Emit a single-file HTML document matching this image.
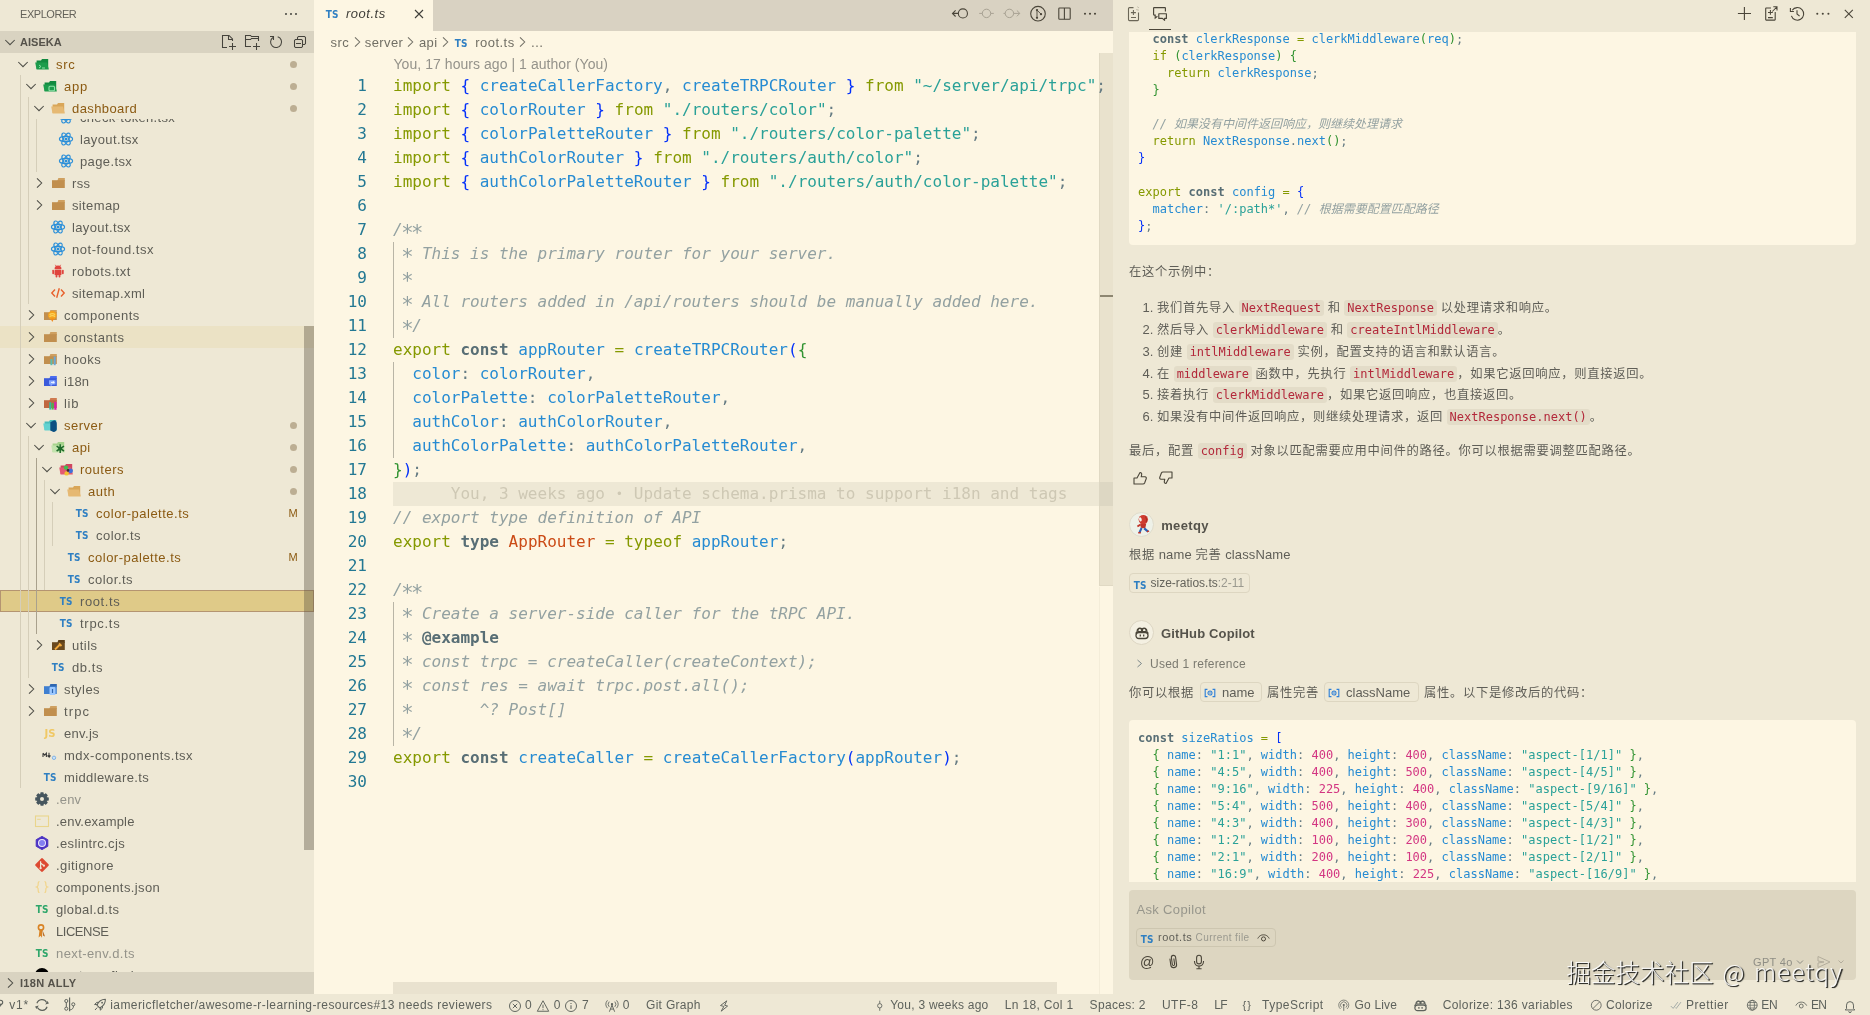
<!DOCTYPE html>
<html lang="en"><head><meta charset="utf-8"><title>root.ts — aiseka</title>
<style>
*{box-sizing:border-box;margin:0;padding:0}
html,body{width:1870px;height:1015px;overflow:hidden;background:#eee8d5}
body{font-family:"Liberation Sans","Noto Sans CJK SC",sans-serif;font-size:13px;color:#5f5e57;position:relative}
#root{position:absolute;left:0;top:0;width:1870px;height:1015px;will-change:transform}
.abs{position:absolute}
svg{display:block;overflow:visible}
.mono{font-family:"DejaVu Sans Mono","Liberation Mono","Noto Sans CJK SC",monospace}
/* sidebar */
#sb{position:absolute;left:0;top:0;width:314px;height:994px;background:#eee8d5;overflow:hidden}
#sb .title{position:absolute;left:20px;top:0;height:31px;line-height:29px;font-size:11px;color:#64625a;letter-spacing:-.45px}
.sech{position:absolute;left:0;width:314px;height:22px;background:#d9d3c1;font-size:11px;font-weight:bold;color:#55524a;line-height:22px}
.sech span{position:absolute;left:20px;top:0}
.row{position:absolute;left:0;width:314px;height:22px;line-height:22px;font-size:13px;color:#5f5e56;white-space:nowrap}
.row .tw{position:absolute;top:3px;width:16px;height:16px}
.row .ic{position:absolute;top:3px;width:16px;height:16px}
.row .nm{position:absolute;top:1px}
.row .dec{position:absolute;left:287px;top:0;width:12px;text-align:center;font-size:11px}
.row .dot{position:absolute;left:289.6px;top:7.6px;width:7px;height:7px;border-radius:4px;background:#bcae93}
.mod .nm,.mod .dec{color:#8b5a12}
.ign .nm{color:#94938a}
.guide{position:absolute;width:1px;background:#d5ceb9}
.guide.act{background:#a9a18d}
/* editor */
#ed{position:absolute;left:314px;top:0;width:799px;height:994px;background:#fdf6e3;overflow:hidden}
#tabs{position:absolute;left:0;top:0;width:799px;height:31px;background:#d9d2c2}
#tab{position:absolute;left:0;top:0;width:119px;height:31px;background:#fdf6e3}
.ln{position:absolute;left:0;width:53px;text-align:right;font-size:16px;height:24px;line-height:24px;color:#237893}
.cl{position:absolute;left:79px;font-size:16px;height:24px;line-height:24px;white-space:pre;color:#657b83}
.k{color:#859900}.s{color:#586e75;font-weight:bold}.v{color:#268bd2}.st{color:#2aa198}.c{color:#93a1a1;font-style:italic}
.t{color:#cb4b16}.n{color:#d33682}.b1{color:#0431fa}.b2{color:#319331}.b3{color:#7b3814}.p{color:#657b83}
.as{font-size:20.5px;margin:0 -1.36px;position:relative;top:4.6px;font-style:normal;line-height:0}
.cb{color:#586e75;font-weight:bold;font-style:normal}
/* panel */
#pn{position:absolute;left:1113px;top:0;width:757px;height:994px;background:#eee8d5;overflow:hidden}
.code{position:absolute;left:16px;width:727px;background:#fdf6e3;border-radius:4px;overflow:hidden}
.code .l{position:absolute;left:9px;font-size:12px;line-height:17px;height:17px;white-space:pre;color:#657b83}
.tx{position:absolute;white-space:nowrap;font-size:13px;color:#5f5e57;line-height:20px;height:20px}
.ico{font-family:"DejaVu Sans Mono","Liberation Mono","Noto Sans CJK SC",monospace;font-size:12px;color:#b3283a;background:#e3dcc8;border-radius:3px;padding:1px 3px;margin:0}
.zh{font-size:12.3px;letter-spacing:.7px}
.chip{position:absolute;border:1px solid #ddd6c1;border-radius:4px;height:20px;font-size:11px;line-height:18px;color:#64635b;white-space:nowrap}
/* status */
#st{position:absolute;left:0;top:994px;width:1870px;height:21px;background:#eee8d5;font-size:12px;color:#5e625c;line-height:21px;white-space:nowrap}
#st .i{position:absolute;top:1px}
</style></head>
<body>
<div id="root">
<div id="sb">
<div class="title">EXPLORER</div>
<div class="abs" style="left:283px;top:6px"><svg width="16" height="16" viewBox="0 0 16 16" style=""><circle cx="3" cy="8" r="1.05" fill="#4d4d46"/><circle cx="8" cy="8" r="1.05" fill="#4d4d46"/><circle cx="13" cy="8" r="1.05" fill="#4d4d46"/></svg></div>
<div class="abs" style="left:0;top:0;width:314px;height:972px;overflow:hidden">
<div class="row " style="top:106px;"><div class="ic" style="left:58px"><svg width="16" height="16" viewBox="0 0 16 16" style=""><ellipse cx="8" cy="8" rx="6.6" ry="2.6" fill="none" stroke="#2b8fd9" stroke-width="1.15"/><ellipse cx="8" cy="8" rx="6.6" ry="2.6" fill="none" stroke="#2b8fd9" stroke-width="1.15" transform="rotate(60 8 8)"/><ellipse cx="8" cy="8" rx="6.6" ry="2.6" fill="none" stroke="#2b8fd9" stroke-width="1.15" transform="rotate(120 8 8)"/><circle cx="8" cy="8" r="1.5" fill="#2b8fd9"/></svg></div><div class="nm" style="left:80px;letter-spacing:0.321px;">check-token.tsx</div></div>
<div class="row " style="top:128px;"><div class="ic" style="left:58px"><svg width="16" height="16" viewBox="0 0 16 16" style=""><ellipse cx="8" cy="8" rx="6.6" ry="2.6" fill="none" stroke="#2b8fd9" stroke-width="1.15"/><ellipse cx="8" cy="8" rx="6.6" ry="2.6" fill="none" stroke="#2b8fd9" stroke-width="1.15" transform="rotate(60 8 8)"/><ellipse cx="8" cy="8" rx="6.6" ry="2.6" fill="none" stroke="#2b8fd9" stroke-width="1.15" transform="rotate(120 8 8)"/><circle cx="8" cy="8" r="1.5" fill="#2b8fd9"/></svg></div><div class="nm" style="left:80px;letter-spacing:0.377px;">layout.tsx</div></div>
<div class="row " style="top:150px;"><div class="ic" style="left:58px"><svg width="16" height="16" viewBox="0 0 16 16" style=""><ellipse cx="8" cy="8" rx="6.6" ry="2.6" fill="none" stroke="#2b8fd9" stroke-width="1.15"/><ellipse cx="8" cy="8" rx="6.6" ry="2.6" fill="none" stroke="#2b8fd9" stroke-width="1.15" transform="rotate(60 8 8)"/><ellipse cx="8" cy="8" rx="6.6" ry="2.6" fill="none" stroke="#2b8fd9" stroke-width="1.15" transform="rotate(120 8 8)"/><circle cx="8" cy="8" r="1.5" fill="#2b8fd9"/></svg></div><div class="nm" style="left:80px;letter-spacing:0.38px;">page.tsx</div></div>
<div class="row " style="top:172px;"><div class="tw" style="left:31px"><svg width="16" height="16" viewBox="0 0 16 16" style=""><path d="M6 3.3 L10.7 8 L6 12.7" fill="none" stroke="#4d4d46" stroke-width="1.05"/></svg></div><div class="ic" style="left:50px"><svg width="16" height="16" viewBox="0 0 16 16" style=""><path d="M8.4 3 L14.8 3 L14.8 6 L7.2 6 Z" fill="#cfa060"/><path d="M2 5.2 L14.8 5.2 L14.8 13 L2 13 Z" fill="#c18f4e"/></svg></div><div class="nm" style="left:72px;letter-spacing:0.336px;">rss</div></div>
<div class="row " style="top:194px;"><div class="tw" style="left:31px"><svg width="16" height="16" viewBox="0 0 16 16" style=""><path d="M6 3.3 L10.7 8 L6 12.7" fill="none" stroke="#4d4d46" stroke-width="1.05"/></svg></div><div class="ic" style="left:50px"><svg width="16" height="16" viewBox="0 0 16 16" style=""><path d="M8.4 3 L14.8 3 L14.8 6 L7.2 6 Z" fill="#cfa060"/><path d="M2 5.2 L14.8 5.2 L14.8 13 L2 13 Z" fill="#c18f4e"/></svg></div><div class="nm" style="left:72px;letter-spacing:0.364px;">sitemap</div></div>
<div class="row " style="top:216px;"><div class="ic" style="left:50px"><svg width="16" height="16" viewBox="0 0 16 16" style=""><ellipse cx="8" cy="8" rx="6.6" ry="2.6" fill="none" stroke="#2b8fd9" stroke-width="1.15"/><ellipse cx="8" cy="8" rx="6.6" ry="2.6" fill="none" stroke="#2b8fd9" stroke-width="1.15" transform="rotate(60 8 8)"/><ellipse cx="8" cy="8" rx="6.6" ry="2.6" fill="none" stroke="#2b8fd9" stroke-width="1.15" transform="rotate(120 8 8)"/><circle cx="8" cy="8" r="1.5" fill="#2b8fd9"/></svg></div><div class="nm" style="left:72px;letter-spacing:0.377px;">layout.tsx</div></div>
<div class="row " style="top:238px;"><div class="ic" style="left:50px"><svg width="16" height="16" viewBox="0 0 16 16" style=""><ellipse cx="8" cy="8" rx="6.6" ry="2.6" fill="none" stroke="#2b8fd9" stroke-width="1.15"/><ellipse cx="8" cy="8" rx="6.6" ry="2.6" fill="none" stroke="#2b8fd9" stroke-width="1.15" transform="rotate(60 8 8)"/><ellipse cx="8" cy="8" rx="6.6" ry="2.6" fill="none" stroke="#2b8fd9" stroke-width="1.15" transform="rotate(120 8 8)"/><circle cx="8" cy="8" r="1.5" fill="#2b8fd9"/></svg></div><div class="nm" style="left:72px;letter-spacing:0.529px;">not-found.tsx</div></div>
<div class="row " style="top:260px;"><div class="ic" style="left:50px"><svg width="16" height="16" viewBox="0 0 16 16" style=""><path d="M4.5 6.2 a3.5 3.6 0 0 1 7 0 Z" fill="#e0443e"/><rect x="4.5" y="6.8" width="7" height="5.4" rx="1" fill="#e0443e"/><rect x="2.3" y="6.8" width="1.7" height="4.4" rx=".8" fill="#e0443e"/><rect x="12" y="6.8" width="1.7" height="4.4" rx=".8" fill="#e0443e"/><rect x="5.6" y="12" width="1.8" height="2.6" rx=".8" fill="#e0443e"/><rect x="8.6" y="12" width="1.8" height="2.6" rx=".8" fill="#e0443e"/><path d="M5.3 1.8 L6.3 3.4 M10.7 1.8 L9.7 3.4" stroke="#e0443e" stroke-width=".8"/></svg></div><div class="nm" style="left:72px;letter-spacing:0.549px;">robots.txt</div></div>
<div class="row " style="top:282px;"><div class="ic" style="left:50px"><svg width="16" height="16" viewBox="0 0 16 16" style=""><path d="M5 4.5 L1.8 8 L5 11.5 M11 4.5 L14.2 8 L11 11.5 M9.3 3.2 L6.7 12.8" fill="none" stroke="#e8602c" stroke-width="1.4"/></svg></div><div class="nm" style="left:72px;letter-spacing:0.366px;">sitemap.xml</div></div>
<div class="row " style="top:304px;"><div class="tw" style="left:23px"><svg width="16" height="16" viewBox="0 0 16 16" style=""><path d="M6 3.3 L10.7 8 L6 12.7" fill="none" stroke="#4d4d46" stroke-width="1.05"/></svg></div><div class="ic" style="left:42px"><svg width="16" height="16" viewBox="0 0 16 16" style=""><path d="M8.4 3 L14.8 3 L14.8 6 L7.2 6 Z" fill="#cfa060"/><path d="M2 5.2 L14.8 5.2 L14.8 13 L2 13 Z" fill="#c18f4e"/><circle cx="10.3" cy="8.2" r="4.3" fill="#f5a21d"/><path d="M8.5 11.5 L10.3 15 L12.1 11.5 Z" fill="#f08a1c"/><path d="M7.5 7.6 q2.8 -2 5.6 0 M7.5 9.6 q2.8 -2 5.6 0" stroke="#fbd35a" stroke-width="1.3" fill="none"/></svg></div><div class="nm" style="left:64px;letter-spacing:0.498px;">components</div></div>
<div class="row " style="top:326px;background:#ebe2c5;"><div class="tw" style="left:23px"><svg width="16" height="16" viewBox="0 0 16 16" style=""><path d="M6 3.3 L10.7 8 L6 12.7" fill="none" stroke="#4d4d46" stroke-width="1.05"/></svg></div><div class="ic" style="left:42px"><svg width="16" height="16" viewBox="0 0 16 16" style=""><path d="M8.4 3 L14.8 3 L14.8 6 L7.2 6 Z" fill="#cfa060"/><path d="M2 5.2 L14.8 5.2 L14.8 13 L2 13 Z" fill="#c18f4e"/></svg></div><div class="nm" style="left:64px;letter-spacing:0.545px;">constants</div></div>
<div class="row " style="top:348px;"><div class="tw" style="left:23px"><svg width="16" height="16" viewBox="0 0 16 16" style=""><path d="M6 3.3 L10.7 8 L6 12.7" fill="none" stroke="#4d4d46" stroke-width="1.05"/></svg></div><div class="ic" style="left:42px"><svg width="16" height="16" viewBox="0 0 16 16" style=""><path d="M8.4 3 L14.8 3 L14.8 6 L7.2 6 Z" fill="#cfa060"/><path d="M2 5.2 L14.8 5.2 L14.8 13 L2 13 Z" fill="#c18f4e"/><path d="M9.4 14.2 V8 " stroke="#5bbcb0" stroke-width="2"/><path d="M12.7 14.2 V5.5" stroke="#6aa8d8" stroke-width="2"/></svg></div><div class="nm" style="left:64px;letter-spacing:0.503px;">hooks</div></div>
<div class="row " style="top:370px;"><div class="tw" style="left:23px"><svg width="16" height="16" viewBox="0 0 16 16" style=""><path d="M6 3.3 L10.7 8 L6 12.7" fill="none" stroke="#4d4d46" stroke-width="1.05"/></svg></div><div class="ic" style="left:42px"><svg width="16" height="16" viewBox="0 0 16 16" style=""><path d="M8.4 3 L14.8 3 L14.8 6 L7.2 6 Z" fill="#4a6cf0"/><path d="M2 5.2 L14.8 5.2 L14.8 13 L2 13 Z" fill="#3b5bdb"/><path d="M7 7.2 h6.5 v4.3 h-3 l-2 2.2 v-2.2 h-1.5 z" fill="#86a8ff"/><path d="M9 9.4 h3 M11 8.2 l1.2 1.2 l-1.2 1.2" stroke="#fff" stroke-width=".9" fill="none"/></svg></div><div class="nm" style="left:64px;letter-spacing:0.175px;">i18n</div></div>
<div class="row " style="top:392px;"><div class="tw" style="left:23px"><svg width="16" height="16" viewBox="0 0 16 16" style=""><path d="M6 3.3 L10.7 8 L6 12.7" fill="none" stroke="#4d4d46" stroke-width="1.05"/></svg></div><div class="ic" style="left:42px"><svg width="16" height="16" viewBox="0 0 16 16" style=""><path d="M8.4 3 L14.8 3 L14.8 6 L7.2 6 Z" fill="#cf7a4f"/><path d="M2 5.2 L14.8 5.2 L14.8 13 L2 13 Z" fill="#c0673f"/><path d="M8.3 14.6 V7.2" stroke="#35b5a0" stroke-width="2.1"/><path d="M10.7 14.6 V8" stroke="#4caf50" stroke-width="2.1"/><path d="M13.4 14.8 V6.8" stroke="#d61fae" stroke-width="2.3"/></svg></div><div class="nm" style="left:64px;letter-spacing:0.697px;">lib</div></div>
<div class="row mod" style="top:414px;"><div class="tw" style="left:23px"><svg width="16" height="16" viewBox="0 0 16 16" style=""><path d="M3.3 6 L8 10.7 L12.7 6" fill="none" stroke="#4d4d46" stroke-width="1.05"/></svg></div><div class="ic" style="left:42px"><svg width="16" height="16" viewBox="0 0 16 16" style=""><path d="M2.6 4.6 L7 4.6 L8 3 L14.2 3 L14.2 13 L2.6 13 Z" fill="#48bdbb"/><path d="M1.2 6.4 L13 6.4 L14.8 13.4 L2.6 13.4 Z" fill="#62d2d0"/><path d="M8.3 5.2 L12.2 3.2 Q14.8 3.6 14.8 7 V12 Q14.6 14.6 11.5 15 L8.3 13.6 Z" fill="#0b4f82"/></svg></div><div class="nm" style="left:64px;letter-spacing:0.477px;">server</div><div class="dot"></div></div>
<div class="row mod" style="top:436px;"><div class="tw" style="left:31px"><svg width="16" height="16" viewBox="0 0 16 16" style=""><path d="M3.3 6 L8 10.7 L12.7 6" fill="none" stroke="#4d4d46" stroke-width="1.05"/></svg></div><div class="ic" style="left:50px"><svg width="16" height="16" viewBox="0 0 16 16" style=""><path d="M2.6 4.6 L7 4.6 L8 3 L14.2 3 L14.2 13 L2.6 13 Z" fill="#a6d38c"/><path d="M1.2 6.4 L13 6.4 L14.8 13.4 L2.6 13.4 Z" fill="#c3e3ad"/><path d="M10.2 5.2 V14 M6.6 7.2 L14 12 M14 7.2 L6.6 12" stroke="#1f6b2a" stroke-width="1.5"/><circle cx="10.2" cy="9.6" r="2" fill="#1f6b2a"/></svg></div><div class="nm" style="left:72px;letter-spacing:0.427px;">api</div><div class="dot"></div></div>
<div class="row mod" style="top:458px;"><div class="tw" style="left:39px"><svg width="16" height="16" viewBox="0 0 16 16" style=""><path d="M3.3 6 L8 10.7 L12.7 6" fill="none" stroke="#4d4d46" stroke-width="1.05"/></svg></div><div class="ic" style="left:58px"><svg width="16" height="16" viewBox="0 0 16 16" style=""><path d="M2.6 4.6 L7 4.6 L8 3 L14.2 3 L14.2 13 L2.6 13 Z" fill="#d0465f"/><path d="M1.2 6.4 L13 6.4 L14.8 13.4 L2.6 13.4 Z" fill="#e25a72"/><circle cx="8" cy="6.6" r="2.2" fill="#3fbf4f"/><circle cx="12.6" cy="9.8" r="2.4" fill="#3f6fd8"/><circle cx="8.6" cy="12.4" r="2.2" fill="#f2c230"/><circle cx="10" cy="9.4" r="1.3" fill="#3a2a2a"/></svg></div><div class="nm" style="left:80px;letter-spacing:0.524px;">routers</div><div class="dot"></div></div>
<div class="row mod" style="top:480px;"><div class="tw" style="left:47px"><svg width="16" height="16" viewBox="0 0 16 16" style=""><path d="M3.3 6 L8 10.7 L12.7 6" fill="none" stroke="#4d4d46" stroke-width="1.05"/></svg></div><div class="ic" style="left:66px"><svg width="16" height="16" viewBox="0 0 16 16" style=""><path d="M2.6 4.6 L7 4.6 L8 3 L14.2 3 L14.2 13 L2.6 13 Z" fill="#d9a658"/><path d="M1.2 6.4 L13 6.4 L14.8 13.4 L2.6 13.4 Z" fill="#e6b973"/></svg></div><div class="nm" style="left:88px;letter-spacing:0.467px;">auth</div><div class="dot"></div></div>
<div class="row mod" style="top:502px;"><div class="ic" style="left:74px"><svg width="16" height="16" viewBox="0 0 16 16" style=""><text x="1.8" y="12.1" font-family="DejaVu Sans, Liberation Sans, sans-serif" font-weight="bold" font-size="11" fill="#2f7fc2" textLength="12.6" lengthAdjust="spacingAndGlyphs">TS</text></svg></div><div class="nm" style="left:96px;letter-spacing:0.503px;">color-palette.ts</div><div class="dec">M</div></div>
<div class="row " style="top:524px;"><div class="ic" style="left:74px"><svg width="16" height="16" viewBox="0 0 16 16" style=""><text x="1.8" y="12.1" font-family="DejaVu Sans, Liberation Sans, sans-serif" font-weight="bold" font-size="11" fill="#2f7fc2" textLength="12.6" lengthAdjust="spacingAndGlyphs">TS</text></svg></div><div class="nm" style="left:96px;letter-spacing:0.488px;">color.ts</div></div>
<div class="row mod" style="top:546px;"><div class="ic" style="left:66px"><svg width="16" height="16" viewBox="0 0 16 16" style=""><text x="1.8" y="12.1" font-family="DejaVu Sans, Liberation Sans, sans-serif" font-weight="bold" font-size="11" fill="#2f7fc2" textLength="12.6" lengthAdjust="spacingAndGlyphs">TS</text></svg></div><div class="nm" style="left:88px;letter-spacing:0.503px;">color-palette.ts</div><div class="dec">M</div></div>
<div class="row " style="top:568px;"><div class="ic" style="left:66px"><svg width="16" height="16" viewBox="0 0 16 16" style=""><text x="1.8" y="12.1" font-family="DejaVu Sans, Liberation Sans, sans-serif" font-weight="bold" font-size="11" fill="#2f7fc2" textLength="12.6" lengthAdjust="spacingAndGlyphs">TS</text></svg></div><div class="nm" style="left:88px;letter-spacing:0.488px;">color.ts</div></div>
<div class="row " style="top:590px;background:#dfca88;outline:1px solid #b49471;outline-offset:-1px;"><div class="ic" style="left:58px"><svg width="16" height="16" viewBox="0 0 16 16" style=""><text x="1.8" y="12.1" font-family="DejaVu Sans, Liberation Sans, sans-serif" font-weight="bold" font-size="11" fill="#2f7fc2" textLength="12.6" lengthAdjust="spacingAndGlyphs">TS</text></svg></div><div class="nm" style="left:80px;letter-spacing:0.596px;">root.ts</div></div>
<div class="row " style="top:612px;"><div class="ic" style="left:58px"><svg width="16" height="16" viewBox="0 0 16 16" style=""><text x="1.8" y="12.1" font-family="DejaVu Sans, Liberation Sans, sans-serif" font-weight="bold" font-size="11" fill="#2f7fc2" textLength="12.6" lengthAdjust="spacingAndGlyphs">TS</text></svg></div><div class="nm" style="left:80px;letter-spacing:0.718px;">trpc.ts</div></div>
<div class="row " style="top:634px;"><div class="tw" style="left:31px"><svg width="16" height="16" viewBox="0 0 16 16" style=""><path d="M6 3.3 L10.7 8 L6 12.7" fill="none" stroke="#4d4d46" stroke-width="1.05"/></svg></div><div class="ic" style="left:50px"><svg width="16" height="16" viewBox="0 0 16 16" style=""><path d="M8.4 3 L14.8 3 L14.8 6 L7.2 6 Z" fill="#5a3d17"/><path d="M2 5.2 L14.8 5.2 L14.8 13 L2 13 Z" fill="#6b4a1e"/><path d="M5 12.5 l5 -5 M9 6.5 l2.5 2.5" stroke="#f2a93b" stroke-width="1.8"/></svg></div><div class="nm" style="left:72px;letter-spacing:0.496px;">utils</div></div>
<div class="row " style="top:656px;"><div class="ic" style="left:50px"><svg width="16" height="16" viewBox="0 0 16 16" style=""><text x="1.8" y="12.1" font-family="DejaVu Sans, Liberation Sans, sans-serif" font-weight="bold" font-size="11" fill="#2f7fc2" textLength="12.6" lengthAdjust="spacingAndGlyphs">TS</text></svg></div><div class="nm" style="left:72px;letter-spacing:0.58px;">db.ts</div></div>
<div class="row " style="top:678px;"><div class="tw" style="left:23px"><svg width="16" height="16" viewBox="0 0 16 16" style=""><path d="M6 3.3 L10.7 8 L6 12.7" fill="none" stroke="#4d4d46" stroke-width="1.05"/></svg></div><div class="ic" style="left:42px"><svg width="16" height="16" viewBox="0 0 16 16" style=""><path d="M8.4 3 L14.8 3 L14.8 6 L7.2 6 Z" fill="#2f66b0"/><path d="M2 5.2 L14.8 5.2 L14.8 13 L2 13 Z" fill="#3f7fd0"/><rect x="7.5" y="6" width="6" height="8" rx="1" fill="#9cc8ff"/><path d="M10.5 8 v4" stroke="#2f66b0" stroke-width="1.2"/></svg></div><div class="nm" style="left:64px;letter-spacing:0.474px;">styles</div></div>
<div class="row " style="top:700px;"><div class="tw" style="left:23px"><svg width="16" height="16" viewBox="0 0 16 16" style=""><path d="M6 3.3 L10.7 8 L6 12.7" fill="none" stroke="#4d4d46" stroke-width="1.05"/></svg></div><div class="ic" style="left:42px"><svg width="16" height="16" viewBox="0 0 16 16" style=""><path d="M8.4 3 L14.8 3 L14.8 6 L7.2 6 Z" fill="#cfa060"/><path d="M2 5.2 L14.8 5.2 L14.8 13 L2 13 Z" fill="#c18f4e"/></svg></div><div class="nm" style="left:64px;letter-spacing:1.144px;">trpc</div></div>
<div class="row " style="top:722px;"><div class="ic" style="left:42px"><svg width="16" height="16" viewBox="0 0 16 16" style=""><text x="2.6" y="12.2" font-family="DejaVu Sans, Liberation Sans, sans-serif" font-weight="bold" font-size="9.6" fill="#f0c864" textLength="11" lengthAdjust="spacingAndGlyphs">JS</text></svg></div><div class="nm" style="left:64px;letter-spacing:0.321px;">env.js</div></div>
<div class="row " style="top:744px;"><div class="ic" style="left:42px"><svg width="16" height="16" viewBox="0 0 16 16" style=""><path d="M1 6.2 v3.8 M1 6.2 l1.7 1.9 l1.7 -1.9 v3.8 M7 5.8 v4.2 l-1.5 -1.5 M7 10 l1.5 -1.5" fill="none" stroke="#3a3a3a" stroke-width="1.1"/><circle cx="12" cy="10.8" r="1.7" fill="#cfe3f7" stroke="#7fb3e6" stroke-width="1"/></svg></div><div class="nm" style="left:64px;letter-spacing:0.51px;">mdx-components.tsx</div></div>
<div class="row " style="top:766px;"><div class="ic" style="left:42px"><svg width="16" height="16" viewBox="0 0 16 16" style=""><text x="1.8" y="12.1" font-family="DejaVu Sans, Liberation Sans, sans-serif" font-weight="bold" font-size="11" fill="#2f7fc2" textLength="12.6" lengthAdjust="spacingAndGlyphs">TS</text></svg></div><div class="nm" style="left:64px;letter-spacing:0.384px;">middleware.ts</div></div>
<div class="row ign" style="top:788px;"><div class="ic" style="left:34px"><svg width="16" height="16" viewBox="0 0 16 16" style=""><rect x="6.3" y="1.2" width="3.4" height="13.6" rx=".7" fill="#46565e" transform="rotate(0 8 8)"/><rect x="6.3" y="1.2" width="3.4" height="13.6" rx=".7" fill="#46565e" transform="rotate(45 8 8)"/><rect x="6.3" y="1.2" width="3.4" height="13.6" rx=".7" fill="#46565e" transform="rotate(90 8 8)"/><rect x="6.3" y="1.2" width="3.4" height="13.6" rx=".7" fill="#46565e" transform="rotate(135 8 8)"/><circle cx="8" cy="8" r="5.2" fill="#46565e"/><circle cx="8" cy="8" r="2" fill="#eee8d5"/></svg></div><div class="nm" style="left:56px;letter-spacing:0.177px;">.env</div></div>
<div class="row " style="top:810px;"><div class="ic" style="left:34px"><svg width="16" height="16" viewBox="0 0 16 16" style=""><rect x="1.5" y="3" width="13" height="10.5" fill="none" stroke="#ead58c" stroke-width="1.1"/><path d="M3.2 6.3 h3.5" stroke="#ead58c" stroke-width="1"/></svg></div><div class="nm" style="left:56px;letter-spacing:0.186px;">.env.example</div></div>
<div class="row " style="top:832px;"><div class="ic" style="left:34px"><svg width="16" height="16" viewBox="0 0 16 16" style=""><path d="M8 1.4 L13.8 4.7 L13.8 11.3 L8 14.6 L2.2 11.3 L2.2 4.7 Z" fill="#4b32c3" stroke="#4b32c3" stroke-width="1" stroke-linejoin="round"/><circle cx="8" cy="8" r="4" fill="#ece8fb"/><circle cx="8" cy="8" r="3" fill="#8480f0"/></svg></div><div class="nm" style="left:56px;letter-spacing:0.368px;">.eslintrc.cjs</div></div>
<div class="row " style="top:854px;"><div class="ic" style="left:34px"><svg width="16" height="16" viewBox="0 0 16 16" style=""><rect x="2.8" y="2.8" width="10.4" height="10.4" rx="1.2" fill="#dd4a32" transform="rotate(45 8 8)"/><path d="M6.6 4.2 L6.6 11.5 M6.6 6 L9.8 8.6" stroke="#eee8d5" stroke-width="1.2" fill="none"/><circle cx="6.6" cy="11.2" r="1.1" fill="#eee8d5"/><circle cx="9.9" cy="8.7" r="1.1" fill="#eee8d5"/></svg></div><div class="nm" style="left:56px;letter-spacing:0.436px;">.gitignore</div></div>
<div class="row " style="top:876px;"><div class="ic" style="left:34px"><svg width="16" height="16" viewBox="0 0 16 16" style=""><path d="M5.5 2.5 C3.5 2.5 4.5 5 4 6.5 C3.8 7.5 2.5 8 2.5 8 C2.5 8 3.8 8.5 4 9.5 C4.5 11 3.5 13.5 5.5 13.5 M10.5 2.5 C12.5 2.5 11.5 5 12 6.5 C12.2 7.5 13.5 8 13.5 8 C13.5 8 12.2 8.5 12 9.5 C11.5 11 12.5 13.5 10.5 13.5" fill="none" stroke="#f2d488" stroke-width="1.15"/></svg></div><div class="nm" style="left:56px;letter-spacing:0.395px;">components.json</div></div>
<div class="row " style="top:898px;"><div class="ic" style="left:34px"><svg width="16" height="16" viewBox="0 0 16 16" style=""><text x="1.8" y="12.1" font-family="DejaVu Sans, Liberation Sans, sans-serif" font-weight="bold" font-size="11" fill="#2ea66a" textLength="12.6" lengthAdjust="spacingAndGlyphs">TS</text></svg></div><div class="nm" style="left:56px;letter-spacing:0.374px;">global.d.ts</div></div>
<div class="row " style="top:920px;"><div class="ic" style="left:34px"><svg width="16" height="16" viewBox="0 0 16 16" style=""><circle cx="7" cy="4.5" r="2.6" fill="none" stroke="#d98324" stroke-width="1.6"/><path d="M5.6 6.5 L4.6 14.5 L6.6 12.8 L8 14.8 L8.4 6.8 Z" fill="#d98324"/><path d="M8.4 6.8 L11 13.4 L9.2 12.8" fill="#b5651d"/></svg></div><div class="nm" style="left:56px;letter-spacing:-0.472px;">LICENSE</div></div>
<div class="row ign" style="top:942px;"><div class="ic" style="left:34px"><svg width="16" height="16" viewBox="0 0 16 16" style=""><text x="1.8" y="12.1" font-family="DejaVu Sans, Liberation Sans, sans-serif" font-weight="bold" font-size="11" fill="#2ea66a" textLength="12.6" lengthAdjust="spacingAndGlyphs">TS</text></svg></div><div class="nm" style="left:56px;letter-spacing:0.412px;">next-env.d.ts</div></div>
<div class="row " style="top:964px;"><div class="ic" style="left:34px"><svg width="16" height="16" viewBox="0 0 16 16" style=""><circle cx="8" cy="8" r="7" fill="#000"/></svg></div><div class="nm" style="left:56px;letter-spacing:0.687px;">next.config.js</div></div>
<div class="guide" style="left:20px;top:75px;height:713px"></div>
<div class="guide" style="left:28px;top:97px;height:207px"></div>
<div class="guide" style="left:36px;top:119px;height:53px"></div>
<div class="guide" style="left:28px;top:436px;height:242px"></div>
<div class="guide act" style="left:36px;top:458px;height:176px"></div>
<div class="guide" style="left:44px;top:480px;height:110px"></div>
<div class="guide" style="left:52px;top:502px;height:44px"></div>
<div class="abs" style="left:0;top:53px;width:314px;height:66px;background:#eee8d5"></div>
<div class="row mod" style="top:53px;"><div class="tw" style="left:15px"><svg width="16" height="16" viewBox="0 0 16 16" style=""><path d="M3.3 6 L8 10.7 L12.7 6" fill="none" stroke="#4d4d46" stroke-width="1.05"/></svg></div><div class="ic" style="left:34px"><svg width="16" height="16" viewBox="0 0 16 16" style=""><path d="M2.6 4.6 L7 4.6 L8 3 L14.2 3 L14.2 13 L2.6 13 Z" fill="#128a40"/><path d="M1.2 6.4 L13 6.4 L14.8 13.4 L2.6 13.4 Z" fill="#1c9c4c"/><path d="M5 9 l2 1.5 l-2 1.5 M8 12 h3" stroke="#8fe0a8" stroke-width="1" fill="none"/></svg></div><div class="nm" style="left:56px;letter-spacing:0.686px;">src</div><div class="dot"></div></div>
<div class="row mod" style="top:75px;"><div class="tw" style="left:23px"><svg width="16" height="16" viewBox="0 0 16 16" style=""><path d="M3.3 6 L8 10.7 L12.7 6" fill="none" stroke="#4d4d46" stroke-width="1.05"/></svg></div><div class="ic" style="left:42px"><svg width="16" height="16" viewBox="0 0 16 16" style=""><path d="M2.6 4.6 L7 4.6 L8 3 L14.2 3 L14.2 13 L2.6 13 Z" fill="#128a40"/><path d="M1.2 6.4 L13 6.4 L14.8 13.4 L2.6 13.4 Z" fill="#1c9c4c"/><rect x="7" y="8.3" width="5.5" height="4.5" rx="1" fill="none" stroke="#8fe0a8" stroke-width="1.1"/></svg></div><div class="nm" style="left:64px;letter-spacing:0.806px;">app</div><div class="dot"></div></div>
<div class="row mod" style="top:97px;"><div class="tw" style="left:31px"><svg width="16" height="16" viewBox="0 0 16 16" style=""><path d="M3.3 6 L8 10.7 L12.7 6" fill="none" stroke="#4d4d46" stroke-width="1.05"/></svg></div><div class="ic" style="left:50px"><svg width="16" height="16" viewBox="0 0 16 16" style=""><path d="M2.6 4.6 L7 4.6 L8 3 L14.2 3 L14.2 13 L2.6 13 Z" fill="#d9a658"/><path d="M1.2 6.4 L13 6.4 L14.8 13.4 L2.6 13.4 Z" fill="#e6b973"/></svg></div><div class="nm" style="left:72px;letter-spacing:0.396px;">dashboard</div><div class="dot"></div></div>
<div class="guide" style="left:20px;top:75px;height:44px"></div>
<div class="guide" style="left:28px;top:97px;height:22px"></div>
<div class="abs" style="left:304px;top:326px;width:10px;height:524px;background:rgba(93,85,68,.4)"></div>
</div>
<div class="sech" style="top:31px"><div class="abs" style="left:2px;top:3px"><svg width="16" height="16" viewBox="0 0 16 16" style=""><path d="M3.3 6 L8 10.7 L12.7 6" fill="none" stroke="#4d4d46" stroke-width="1.05"/></svg></div><span style="letter-spacing:0.047px;">AISEKA</span><div class="abs" style="left:220px;top:3px"><svg width="16" height="16" viewBox="0 0 16 16" style=""><path d="M7 13.5 H2.5 V1.5 H9 L12.5 5 V7 M8.5 1.5 V5.5 H12.5" fill="none" stroke="#45433c" stroke-width="1.05"/><path d="M12.5 9 v7 M9 12.5 h7" stroke="#45433c" stroke-width="1.05" fill="none"/></svg></div><div class="abs" style="left:244px;top:3px"><svg width="16" height="16" viewBox="0 0 16 16" style=""><path d="M7 12.5 H1.5 V1.5 H6.5 L7.5 2.5 H14.5 V7 M14.5 4.5 H7.5 L6.5 5.5 H1.5" fill="none" stroke="#45433c" stroke-width="1.05"/><path d="M12.5 9 v7 M9 12.5 h7" stroke="#45433c" stroke-width="1.05" fill="none"/></svg></div><div class="abs" style="left:268px;top:3px"><svg width="16" height="16" viewBox="0 0 16 16" style=""><path d="M4.9 3.55 A5.5 5.5 0 1 0 9.7 2.77" fill="none" stroke="#45433c" stroke-width="1.05"/><path d="M2 2.5 H5.5 V6" fill="none" stroke="#45433c" stroke-width="1.05"/></svg></div><div class="abs" style="left:292px;top:3px"><svg width="16" height="16" viewBox="0 0 16 16" style=""><path d="M5.5 5.3 V3.5 L6.5 2.5 H12.5 L13.5 3.5 V9.5 L12.5 10.5 H10.7" fill="none" stroke="#45433c" stroke-width="1.05"/><path d="M3.5 5.5 H9.5 L10.5 6.5 V12.5 L9.5 13.5 H3.5 L2.5 12.5 V6.5 Z" fill="none" stroke="#45433c" stroke-width="1.05"/><path d="M4 9.5 h5" stroke="#45433c" stroke-width="1.05"/></svg></div></div>
<div class="sech" style="top:972px;height:22px"><div class="abs" style="left:1.7px;top:3px"><svg width="16" height="16" viewBox="0 0 16 16" style=""><path d="M6 3.3 L10.7 8 L6 12.7" fill="none" stroke="#4d4d46" stroke-width="1.05"/></svg></div><span style="letter-spacing:0.301px;">I18N ALLY</span></div>
</div>
<div id="ed">
<div id="tabs"><div id="tab"><div class="abs" style="left:10px;top:5.9px"><svg width="16" height="16" viewBox="0 0 16 16" style=""><text x="1.8" y="12.1" font-family="DejaVu Sans, Liberation Sans, sans-serif" font-weight="bold" font-size="11" fill="#2f7fc2" textLength="12.6" lengthAdjust="spacingAndGlyphs">TS</text></svg></div><div class="abs" style="left:32px;top:0;line-height:28px;font-style:italic;color:#3e3d38;letter-spacing:0.513px;">root.ts</div><div class="abs" style="left:97px;top:6px"><svg width="16" height="16" viewBox="0 0 16 16" style=""><path d="M4 4 L12 12 M12 4 L4 12" stroke="#3f3f3a" stroke-width="1.1" fill="none"/></svg></div></div><svg class="abs" style="left:631px;top:0" width="160" height="30" viewBox="945 0 160 30"><circle cx="962.9" cy="13.4" r="4.55" fill="none" stroke="#4a4539" stroke-width="1.1"/><path d="M958.3 13.4 H952.6 M955.6 10.3 L952.5 13.4 L955.6 16.5" fill="none" stroke="#4a4539" stroke-width="1.1"/><circle cx="986.5" cy="13.4" r="4.2" fill="none" stroke="#a8a293" stroke-width="1"/><path d="M979.2 13.4 H982.3 M990.7 13.4 H993.8" stroke="#a8a293" stroke-width="1"/><circle cx="1009.4" cy="13.4" r="4.2" fill="none" stroke="#a8a293" stroke-width="1"/><path d="M1003.5 13.4 H1005.2 M1013.6 13.4 H1019.7 M1016.9 10.5 L1019.8 13.4 L1016.9 16.3" fill="none" stroke="#a8a293" stroke-width="1"/><circle cx="1038" cy="13.7" r="7.3" fill="none" stroke="#4a4539" stroke-width="1.1"/><path d="M1037 10.1 V17.8 M1037 10.1 L1041 14.1" fill="none" stroke="#4a4539" stroke-width=".9"/><circle cx="1037" cy="10.1" r="1.15" fill="#4a4539"/><circle cx="1041" cy="14.2" r="1.15" fill="#4a4539"/><circle cx="1037" cy="17.8" r="1.15" fill="#4a4539"/><rect x="1058.8" y="8" width="11.4" height="11.3" rx=".8" fill="none" stroke="#4a4539" stroke-width="1.1"/><path d="M1064.4 8 V19.3" stroke="#4a4539" stroke-width="1.1"/><circle cx="1085" cy="13.8" r="1.05" fill="#4a4539"/><circle cx="1090" cy="13.8" r="1.05" fill="#4a4539"/><circle cx="1095" cy="13.8" r="1.05" fill="#4a4539"/></svg></div>
<div class="abs" style="left:0;top:31px;width:785px;height:22px;line-height:22px;color:#716f65;white-space:nowrap"><div class="abs" style="left:16.5px;top:1px;letter-spacing:0.486px;">src</div><div class="abs" style="left:34.5px;top:3px"><svg width="16" height="16" viewBox="0 0 16 16" style=""><path d="M6 3.3 L10.7 8 L6 12.7" fill="none" stroke="#716f65" stroke-width="1.05"/></svg></div><div class="abs" style="left:50.8px;top:1px;letter-spacing:0.397px;">server</div><div class="abs" style="left:88.3px;top:3px"><svg width="16" height="16" viewBox="0 0 16 16" style=""><path d="M6 3.3 L10.7 8 L6 12.7" fill="none" stroke="#716f65" stroke-width="1.05"/></svg></div><div class="abs" style="left:105px;top:1px;letter-spacing:0.377px;">api</div><div class="abs" style="left:123px;top:3px"><svg width="16" height="16" viewBox="0 0 16 16" style=""><path d="M6 3.3 L10.7 8 L6 12.7" fill="none" stroke="#716f65" stroke-width="1.05"/></svg></div><div class="abs" style="left:139px;top:3.5px"><svg width="16" height="16" viewBox="0 0 16 16" style=""><text x="1.8" y="12.1" font-family="DejaVu Sans, Liberation Sans, sans-serif" font-weight="bold" font-size="11" fill="#2f7fc2" textLength="12.6" lengthAdjust="spacingAndGlyphs">TS</text></svg></div><div class="abs" style="left:161.2px;top:1px;letter-spacing:0.48px;">root.ts</div><div class="abs" style="left:200px;top:3px"><svg width="16" height="16" viewBox="0 0 16 16" style=""><path d="M6 3.3 L10.7 8 L6 12.7" fill="none" stroke="#716f65" stroke-width="1.05"/></svg></div><div class="abs" style="left:216.5px;top:1px">…</div></div>
<div class="abs" style="left:79.5px;top:53px;height:21px;line-height:23px;font-size:14px;color:#94928a;white-space:nowrap;letter-spacing:0.053px;">You, 17 hours ago | 1 author (You)</div>
<div class="abs" style="left:785px;top:53px;width:14px;height:533px;background:#e9e2cd;border-left:1px solid #e0d9c4;border-bottom:1px solid #e0d9c4"></div>
<div class="abs" style="left:785px;top:482px;width:14px;height:24px;background:#ddd7c3"></div>
<div class="abs" style="left:785px;top:587px;width:1px;height:407px;background:#f4edd9"></div>
<div class="abs" style="left:786px;top:295px;width:13px;height:2px;background:#8d8671"></div>
<div class="abs" style="left:79px;top:482px;width:706px;height:24px;background:#eee8d5"></div>
<div class="abs" style="left:79px;top:242px;width:1px;height:96px;background:#b9b5a6"></div>
<div class="abs" style="left:79px;top:362px;width:1px;height:96px;background:#b9b5a6"></div>
<div class="abs" style="left:79px;top:602px;width:1px;height:144px;background:#b9b5a6"></div>
<div class="ln mono" style="top:74px">1</div><div class="cl mono" style="top:74px"><span class="k">import</span> <span class="b1">{</span> <span class="v">createCallerFactory</span><span class="p">, </span><span class="v">createTRPCRouter</span> <span class="b1">}</span> <span class="k">from</span> <span class="st">"~/server/api/trpc"</span><span class="p">;</span></div>
<div class="ln mono" style="top:98px">2</div><div class="cl mono" style="top:98px"><span class="k">import</span> <span class="b1">{</span> <span class="v">colorRouter</span> <span class="b1">}</span> <span class="k">from</span> <span class="st">"./routers/color"</span><span class="p">;</span></div>
<div class="ln mono" style="top:122px">3</div><div class="cl mono" style="top:122px"><span class="k">import</span> <span class="b1">{</span> <span class="v">colorPaletteRouter</span> <span class="b1">}</span> <span class="k">from</span> <span class="st">"./routers/color-palette"</span><span class="p">;</span></div>
<div class="ln mono" style="top:146px">4</div><div class="cl mono" style="top:146px"><span class="k">import</span> <span class="b1">{</span> <span class="v">authColorRouter</span> <span class="b1">}</span> <span class="k">from</span> <span class="st">"./routers/auth/color"</span><span class="p">;</span></div>
<div class="ln mono" style="top:170px">5</div><div class="cl mono" style="top:170px"><span class="k">import</span> <span class="b1">{</span> <span class="v">authColorPaletteRouter</span> <span class="b1">}</span> <span class="k">from</span> <span class="st">"./routers/auth/color-palette"</span><span class="p">;</span></div>
<div class="ln mono" style="top:194px">6</div><div class="cl mono" style="top:194px"></div>
<div class="ln mono" style="top:218px">7</div><div class="cl mono" style="top:218px"><span class="c">/<span class="as">*</span><span class="as">*</span></span></div>
<div class="ln mono" style="top:242px">8</div><div class="cl mono" style="top:242px"><span class="c"> <span class="as">*</span> This is the primary router for your server.</span></div>
<div class="ln mono" style="top:266px">9</div><div class="cl mono" style="top:266px"><span class="c"> <span class="as">*</span></span></div>
<div class="ln mono" style="top:290px">10</div><div class="cl mono" style="top:290px"><span class="c"> <span class="as">*</span> All routers added in /api/routers should be manually added here.</span></div>
<div class="ln mono" style="top:314px">11</div><div class="cl mono" style="top:314px"><span class="c"> <span class="as">*</span>/</span></div>
<div class="ln mono" style="top:338px">12</div><div class="cl mono" style="top:338px"><span class="k">export</span> <span class="s">const</span> <span class="v">appRouter</span> <span class="k">=</span> <span class="v">createTRPCRouter</span><span class="b1">(</span><span class="b2">{</span></div>
<div class="ln mono" style="top:362px">13</div><div class="cl mono" style="top:362px">  <span class="v">color</span><span class="p">: </span><span class="v">colorRouter</span><span class="p">,</span></div>
<div class="ln mono" style="top:386px">14</div><div class="cl mono" style="top:386px">  <span class="v">colorPalette</span><span class="p">: </span><span class="v">colorPaletteRouter</span><span class="p">,</span></div>
<div class="ln mono" style="top:410px">15</div><div class="cl mono" style="top:410px">  <span class="v">authColor</span><span class="p">: </span><span class="v">authColorRouter</span><span class="p">,</span></div>
<div class="ln mono" style="top:434px">16</div><div class="cl mono" style="top:434px">  <span class="v">authColorPalette</span><span class="p">: </span><span class="v">authColorPaletteRouter</span><span class="p">,</span></div>
<div class="ln mono" style="top:458px">17</div><div class="cl mono" style="top:458px"><span class="b2">}</span><span class="b1">)</span><span class="p">;</span></div>
<div class="ln mono" style="top:482px">18</div><div class="cl mono" style="top:482px"><span style="color:#cec8b4">      You, 3 weeks ago <span style="display:inline-block;width:9.63px;text-align:center;font-size:12px;line-height:0;vertical-align:1px">•</span> Update schema.prisma to support i18n and tags</span></div>
<div class="ln mono" style="top:506px">19</div><div class="cl mono" style="top:506px"><span class="c">// export type definition of API</span></div>
<div class="ln mono" style="top:530px">20</div><div class="cl mono" style="top:530px"><span class="k">export</span> <span class="s">type</span> <span class="t">AppRouter</span> <span class="k">=</span> <span class="k">typeof</span> <span class="v">appRouter</span><span class="p">;</span></div>
<div class="ln mono" style="top:554px">21</div><div class="cl mono" style="top:554px"></div>
<div class="ln mono" style="top:578px">22</div><div class="cl mono" style="top:578px"><span class="c">/<span class="as">*</span><span class="as">*</span></span></div>
<div class="ln mono" style="top:602px">23</div><div class="cl mono" style="top:602px"><span class="c"> <span class="as">*</span> Create a server-side caller for the tRPC API.</span></div>
<div class="ln mono" style="top:626px">24</div><div class="cl mono" style="top:626px"><span class="c"> <span class="as">*</span> </span><span class="cb">@example</span></div>
<div class="ln mono" style="top:650px">25</div><div class="cl mono" style="top:650px"><span class="c"> <span class="as">*</span> const trpc = createCaller(createContext);</span></div>
<div class="ln mono" style="top:674px">26</div><div class="cl mono" style="top:674px"><span class="c"> <span class="as">*</span> const res = await trpc.post.all();</span></div>
<div class="ln mono" style="top:698px">27</div><div class="cl mono" style="top:698px"><span class="c"> <span class="as">*</span>       ^? Post[]</span></div>
<div class="ln mono" style="top:722px">28</div><div class="cl mono" style="top:722px"><span class="c"> <span class="as">*</span>/</span></div>
<div class="ln mono" style="top:746px">29</div><div class="cl mono" style="top:746px"><span class="k">export</span> <span class="s">const</span> <span class="v">createCaller</span> <span class="k">=</span> <span class="v">createCallerFactory</span><span class="b1">(</span><span class="v">appRouter</span><span class="b1">)</span><span class="p">;</span></div>
<div class="ln mono" style="top:770px">30</div><div class="cl mono" style="top:770px"></div>
<div class="abs" style="left:79px;top:982px;width:664px;height:12px;background:#e9e2cf"></div>
</div>
<div id="pn">
<div class="code mono" style="top:20px;height:225px">
<div class="l" style="top:11px">  <span class="s">const</span> <span class="v">clerkResponse</span> <span class="k">=</span> <span class="v">clerkMiddleware</span><span class="b2">(</span><span class="v">req</span><span class="b2">)</span><span class="p">;</span></div>
<div class="l" style="top:28px">  <span class="k">if</span> <span class="b2">(</span><span class="v">clerkResponse</span><span class="b2">)</span> <span class="b2">{</span></div>
<div class="l" style="top:45px">    <span class="k">return</span> <span class="v">clerkResponse</span><span class="p">;</span></div>
<div class="l" style="top:62px">  <span class="b2">}</span></div>
<div class="l" style="top:79px"></div>
<div class="l" style="top:96px"><span class="c">  // 如果没有中间件返回响应，则继续处理请求</span></div>
<div class="l" style="top:113px">  <span class="k">return</span> <span class="v">NextResponse</span><span class="p">.</span><span class="v">next</span><span class="b2">(</span><span class="b2">)</span><span class="p">;</span></div>
<div class="l" style="top:130px"><span class="b1">}</span></div>
<div class="l" style="top:147px"></div>
<div class="l" style="top:164px"><span class="k">export</span> <span class="s">const</span> <span class="v">config</span> <span class="k">=</span> <span class="b1">{</span></div>
<div class="l" style="top:181px">  <span class="v">matcher</span><span class="p">: </span><span class="st">'/:path*'</span><span class="p">, </span><span class="c">// 根据需要配置匹配路径</span></div>
<div class="l" style="top:198px"><span class="b1">}</span><span class="p">;</span></div>
</div>
<div class="abs" style="left:0;top:0;width:757px;height:32px;background:#eee8d5"><svg class="abs" style="left:0;top:0" width="757" height="31" viewBox="1113 0 757 31"><path d="M1133.5 7.6 H1129.5 Q1128.5 7.6 1128.5 8.6 V19.6 Q1128.5 20.6 1129.5 20.6 H1137.5 Q1138.5 20.6 1138.5 19.6 V12.6" fill="none" stroke="#6b6657" stroke-width="1.1"/><path d="M1130.9 12.6 H1135.9 M1133.4 10.1 V15.1 M1131 17.4 H1136" stroke="#6b6657" stroke-width="1.05"/><path d="M1137.3 6.8 l1.6 1 M1136.2 9.6 l2.6 .6" stroke="#b9b3a2" stroke-width=".9"/><path d="M1165.4 11.6 V8.1 Q1165.4 7.6 1164.9 7.6 H1154.1 Q1153.6 7.6 1153.6 8.1 V14.6 Q1153.6 15.1 1154.1 15.1 H1155.2 V18.1 L1157.4 16.2" fill="none" stroke="#4a4539" stroke-width="1.15"/><path d="M1158.8 13.7 H1166.4 V18.4 H1164.6 V20.3 L1162.4 18.4 H1158.8 Z" fill="none" stroke="#4a4539" stroke-width="1.15" stroke-linejoin="round"/><path d="M1744.4 7.1 V20 M1737.9 13.55 H1751" stroke="#4a4539" stroke-width="1.1"/><path d="M1771 8 H1766.2 Q1765.7 8 1765.7 8.5 V19.6 Q1765.7 20.1 1766.2 20.1 H1774.7 Q1775.2 20.1 1775.2 19.6 V12" fill="none" stroke="#4a4539" stroke-width="1.1"/><path d="M1768 12.4 H1772.8 M1770.4 10 V14.8 M1768 17.6 H1772.8" stroke="#4a4539" stroke-width="1.05"/><path d="M1772.3 11.5 L1777 6.8 M1773.3 6.8 H1777 V10.5" fill="none" stroke="#4a4539" stroke-width="1.05"/><path d="M1792.2 10.3 A6.3 6.3 0 1 1 1791.4 15.8" fill="none" stroke="#4a4539" stroke-width="1.1"/><path d="M1790.4 8 V11.5 H1793.9" fill="none" stroke="#4a4539" stroke-width="1.1"/><path d="M1797 10.3 V14 L1799.6 16.2" fill="none" stroke="#4a4539" stroke-width="1.1"/><circle cx="1817.3" cy="13.8" r="1.05" fill="#4a4539"/><circle cx="1822.8" cy="13.8" r="1.05" fill="#4a4539"/><circle cx="1828.4" cy="13.8" r="1.05" fill="#4a4539"/><path d="M1844.8 9.8 L1852.8 17.8 M1852.8 9.8 L1844.8 17.8" stroke="#4a4539" stroke-width="1.1"/></svg><div class="abs" style="left:36px;top:28.8px;width:22px;height:1.4px;background:#4a4539"></div></div>
<div class="tx" style="left:16px;top:261.5px;"><span class="zh">在这个示例中：</span></div>
<div class="tx" style="left:29.5px;top:297.5px;">1.</div>
<div class="tx" style="left:44px;top:297.5px;"><span class="zh">我们首先导入</span> <span class="ico">NextRequest</span> <span class="zh">和</span> <span class="ico">NextResponse</span> <span class="zh">以处理请求和响应。</span></div>
<div class="tx" style="left:29.5px;top:319.5px;">2.</div>
<div class="tx" style="left:44px;top:319.5px;"><span class="zh">然后导入</span> <span class="ico">clerkMiddleware</span> <span class="zh">和</span> <span class="ico">createIntlMiddleware</span><span class="zh">。</span></div>
<div class="tx" style="left:29.5px;top:341.5px;">3.</div>
<div class="tx" style="left:44px;top:341.5px;"><span class="zh">创建</span> <span class="ico">intlMiddleware</span> <span class="zh">实例，配置支持的语言和默认语言。</span></div>
<div class="tx" style="left:29.5px;top:363.5px;">4.</div>
<div class="tx" style="left:44px;top:363.5px;"><span class="zh">在</span> <span class="ico">middleware</span> <span class="zh">函数中，先执行</span> <span class="ico">intlMiddleware</span><span class="zh">，如果它返回响应，则直接返回。</span></div>
<div class="tx" style="left:29.5px;top:385px;">5.</div>
<div class="tx" style="left:44px;top:385px;"><span class="zh">接着执行</span> <span class="ico">clerkMiddleware</span><span class="zh">，如果它返回响应，也直接返回。</span></div>
<div class="tx" style="left:29.5px;top:406.5px;">6.</div>
<div class="tx" style="left:44px;top:406.5px;"><span class="zh">如果没有中间件返回响应，则继续处理请求，返回</span> <span class="ico">NextResponse.next()</span><span class="zh">。</span></div>
<div class="tx" style="left:16px;top:441px;"><span class="zh">最后，配置</span> <span class="ico">config</span> <span class="zh">对象以匹配需要应用中间件的路径。你可以根据需要调整匹配路径。</span></div>
<div class="abs" style="left:19px;top:470px"><svg width="16" height="16" viewBox="0 0 16 16" style=""><path d="M2 8 H5 L8 2.5 C9.5 2.5 10 3.5 9.6 5 L9.2 6.8 H13 C14.2 6.8 14.6 7.8 14.2 8.8 L12.6 13 C12.3 13.7 11.8 14 11 14 H2 Z" fill="none" stroke="#4a4539" stroke-width="1.1" stroke-linejoin="round"/></svg></div><div class="abs" style="left:45px;top:470px"><svg width="16" height="16" viewBox="0 0 16 16" style=""><g transform="rotate(180 8 8)"><path d="M2 8 H5 L8 2.5 C9.5 2.5 10 3.5 9.6 5 L9.2 6.8 H13 C14.2 6.8 14.6 7.8 14.2 8.8 L12.6 13 C12.3 13.7 11.8 14 11 14 H2 Z" fill="none" stroke="#4a4539" stroke-width="1.1" stroke-linejoin="round"/></g></svg></div>
<div class="abs" style="left:16px;top:512.2px;width:25px;height:25px;border-radius:12.5px;background:#eef1e8;border:1px solid #e0dccb;overflow:hidden"><svg width="24" height="24" viewBox="0 0 24 24" style="margin:-.5px 0 0 -.3px"><path d="M10.3 10.5 L16.2 10.8 L15.2 15.6 L10.8 14.8 Z" fill="#c0352b"/><path d="M10.6 11.4 L7.4 13.6" stroke="#c0352b" stroke-width="1.8"/><circle cx="13.3" cy="6.6" r="4.7" fill="#cf3b30"/><ellipse cx="10.4" cy="6.4" rx="1.3" ry="2.1" fill="#f4f4ee" transform="rotate(-15 10.4 6.4)"/><path d="M15.5 3.5 q1.5 2.5 .8 5.5" stroke="#9d271f" stroke-width=".8" fill="none"/><path d="M11.6 15 L9.4 19.6 M14.2 15.4 L17.8 18.4" stroke="#2f62b5" stroke-width="2.1"/><path d="M8.2 19.8 h2.6 M17 19 l2 -1.2" stroke="#c0352b" stroke-width="1.4"/></svg></div>
<div class="tx" style="left:48.200000000000045px;top:516px;font-weight:bold;color:#55534b;letter-spacing:0.377px;">meetqy</div>
<div class="tx" style="left:16px;top:545px;letter-spacing:.12px"><span class="zh">根据</span> name <span class="zh">完善</span> className</div>
<div class="chip" style="left:16px;top:573px;width:121px"><div class="abs" style="left:2px;top:3px"><svg width="16" height="16" viewBox="0 0 16 16" style=""><text x="1.8" y="12.1" font-family="DejaVu Sans, Liberation Sans, sans-serif" font-weight="bold" font-size="11" fill="#2f7fc2" textLength="12.6" lengthAdjust="spacingAndGlyphs">TS</text></svg></div><div class="abs" style="left:20.5px;top:0;font-size:12px;letter-spacing:-0.011px;">size-ratios.ts<span style="color:#9a998f">:2-11</span></div></div>
<div class="abs" style="left:16px;top:620.4px;width:25px;height:25px;border-radius:12.5px;background:#f4f0e2;border:1px solid #ddd6c3"><div class="abs" style="left:3.5px;top:3.5px"><svg width="16" height="16" viewBox="0 0 16 16" style=""><path d="M3 7 C3 3 6 2.5 8 4 C10 2.5 13 3 13 7 M2 8.5 C2 7.5 3 7 3 7 M14 8.5 C14 7.5 13 7 13 7" fill="none" stroke="#4a4539" stroke-width="1.3"/><rect x="2" y="7.5" width="12" height="6" rx="2.8" fill="none" stroke="#4a4539" stroke-width="1.3"/><path d="M6.3 9.5 v2 M9.7 9.5 v2" stroke="#4a4539" stroke-width="1.3"/><path d="M4 4.5 a2 2 0 0 1 3.5 0 v2 h-3.5z M8.5 4.5 a2 2 0 0 1 3.5 0 v2 h-3.5z" fill="none" stroke="#4a4539" stroke-width="1.1"/></svg></div></div>
<div class="tx" style="left:48px;top:623.5px;font-weight:bold;color:#55534b;letter-spacing:0.154px;">GitHub Copilot</div>
<div class="abs" style="left:20px;top:657px"><svg width="13" height="13" viewBox="0 0 13 13" style=""><path d="M4.5 3 L8.5 6.5 L4.5 10" fill="none" stroke="#7b878a" stroke-width="1"/></svg></div>
<div class="tx" style="left:37px;top:653.5px;font-size:12px;color:#7b7a70;letter-spacing:0.237px;">Used 1 reference</div>
<div class="tx" style="left:16px;top:682.5px;"><span class="zh">你可以根据</span></div>
<div class="chip" style="left:86.5px;top:682px;width:62px;height:20px;font-size:13px;line-height:18px;color:#5f5e57"><div class="abs" style="left:3.7px;top:3.6px"><svg width="12" height="12" viewBox="0 0 16 16" style=""><path d="M4.6 3.2 H1.6 V12.8 H4.6 M11.4 3.2 H14.4 V12.8 H11.4" fill="none" stroke="#2f80d8" stroke-width="1.5"/><circle cx="8" cy="8" r="2.7" fill="none" stroke="#2f80d8" stroke-width="1.4"/><circle cx="8" cy="8" r="1.1" fill="#2f80d8"/></svg></div><div class="abs" style="left:21.5px;top:.8px">name</div></div>
<div class="tx" style="left:154px;top:682.5px;"><span class="zh">属性完善</span></div>
<div class="chip" style="left:210.5px;top:682px;width:95px;height:20px;font-size:13px;line-height:18px;color:#5f5e57"><div class="abs" style="left:3.7px;top:3.6px"><svg width="12" height="12" viewBox="0 0 16 16" style=""><path d="M4.6 3.2 H1.6 V12.8 H4.6 M11.4 3.2 H14.4 V12.8 H11.4" fill="none" stroke="#2f80d8" stroke-width="1.5"/><circle cx="8" cy="8" r="2.7" fill="none" stroke="#2f80d8" stroke-width="1.4"/><circle cx="8" cy="8" r="1.1" fill="#2f80d8"/></svg></div><div class="abs" style="left:21.5px;top:.8px">className</div></div>
<div class="tx" style="left:311px;top:682.5px;"><span class="zh">属性。以下是修改后的代码：</span></div>
<div class="code mono" style="top:720px;height:162px;border-radius:4px 4px 0 0">
<div class="l" style="top:9.5px"><span class="s">const</span> <span class="v">sizeRatios</span> <span class="k">=</span> <span class="b1">[</span></div>
<div class="l" style="top:26.5px">  <span class="b2">{</span> <span class="v">name</span><span class="p">: </span><span class="st">"1:1"</span><span class="p">, </span><span class="v">width</span><span class="p">: </span><span class="n">400</span><span class="p">, </span><span class="v">height</span><span class="p">: </span><span class="n">400</span><span class="p">, </span><span class="v">className</span><span class="p">: </span><span class="st">"aspect-[1/1]"</span> <span class="b2">}</span><span class="p">,</span></div>
<div class="l" style="top:43.5px">  <span class="b2">{</span> <span class="v">name</span><span class="p">: </span><span class="st">"4:5"</span><span class="p">, </span><span class="v">width</span><span class="p">: </span><span class="n">400</span><span class="p">, </span><span class="v">height</span><span class="p">: </span><span class="n">500</span><span class="p">, </span><span class="v">className</span><span class="p">: </span><span class="st">"aspect-[4/5]"</span> <span class="b2">}</span><span class="p">,</span></div>
<div class="l" style="top:60.5px">  <span class="b2">{</span> <span class="v">name</span><span class="p">: </span><span class="st">"9:16"</span><span class="p">, </span><span class="v">width</span><span class="p">: </span><span class="n">225</span><span class="p">, </span><span class="v">height</span><span class="p">: </span><span class="n">400</span><span class="p">, </span><span class="v">className</span><span class="p">: </span><span class="st">"aspect-[9/16]"</span> <span class="b2">}</span><span class="p">,</span></div>
<div class="l" style="top:77.5px">  <span class="b2">{</span> <span class="v">name</span><span class="p">: </span><span class="st">"5:4"</span><span class="p">, </span><span class="v">width</span><span class="p">: </span><span class="n">500</span><span class="p">, </span><span class="v">height</span><span class="p">: </span><span class="n">400</span><span class="p">, </span><span class="v">className</span><span class="p">: </span><span class="st">"aspect-[5/4]"</span> <span class="b2">}</span><span class="p">,</span></div>
<div class="l" style="top:94.5px">  <span class="b2">{</span> <span class="v">name</span><span class="p">: </span><span class="st">"4:3"</span><span class="p">, </span><span class="v">width</span><span class="p">: </span><span class="n">400</span><span class="p">, </span><span class="v">height</span><span class="p">: </span><span class="n">300</span><span class="p">, </span><span class="v">className</span><span class="p">: </span><span class="st">"aspect-[4/3]"</span> <span class="b2">}</span><span class="p">,</span></div>
<div class="l" style="top:111.5px">  <span class="b2">{</span> <span class="v">name</span><span class="p">: </span><span class="st">"1:2"</span><span class="p">, </span><span class="v">width</span><span class="p">: </span><span class="n">100</span><span class="p">, </span><span class="v">height</span><span class="p">: </span><span class="n">200</span><span class="p">, </span><span class="v">className</span><span class="p">: </span><span class="st">"aspect-[1/2]"</span> <span class="b2">}</span><span class="p">,</span></div>
<div class="l" style="top:128.5px">  <span class="b2">{</span> <span class="v">name</span><span class="p">: </span><span class="st">"2:1"</span><span class="p">, </span><span class="v">width</span><span class="p">: </span><span class="n">200</span><span class="p">, </span><span class="v">height</span><span class="p">: </span><span class="n">100</span><span class="p">, </span><span class="v">className</span><span class="p">: </span><span class="st">"aspect-[2/1]"</span> <span class="b2">}</span><span class="p">,</span></div>
<div class="l" style="top:145.5px">  <span class="b2">{</span> <span class="v">name</span><span class="p">: </span><span class="st">"16:9"</span><span class="p">, </span><span class="v">width</span><span class="p">: </span><span class="n">400</span><span class="p">, </span><span class="v">height</span><span class="p">: </span><span class="n">225</span><span class="p">, </span><span class="v">className</span><span class="p">: </span><span class="st">"aspect-[16/9]"</span> <span class="b2">}</span><span class="p">,</span></div>
</div>
<div class="abs" style="left:16px;top:890px;width:727px;height:90px;background:#ddd6c1;border-radius:4px"></div>
<div class="tx" style="left:23.5px;top:899.5px;color:#97968c;letter-spacing:0.335px;">Ask Copilot</div>
<div class="chip" style="left:23px;top:927.6px;width:139.5px;height:19px;line-height:17px;border-color:#cdc6b0"><div class="abs" style="left:2px;top:2px"><svg width="16" height="16" viewBox="0 0 16 16" style=""><text x="1.8" y="12.1" font-family="DejaVu Sans, Liberation Sans, sans-serif" font-weight="bold" font-size="11" fill="#2f7fc2" textLength="12.6" lengthAdjust="spacingAndGlyphs">TS</text></svg></div><div class="abs" style="left:21px;top:0;color:#5f5e57;letter-spacing:0.539px;">root.ts</div><div class="abs" style="left:58.5px;top:0;font-size:10px;color:#9a998f;letter-spacing:0.427px;">Current file</div><div class="abs" style="left:120px;top:3px"><svg width="13" height="13" viewBox="0 0 16 16" style=""><path d="M1 8 C3 4 6 3.5 8 3.5 C10 3.5 13 4 15 8" fill="none" stroke="#4a4539" stroke-width="1.2"/><circle cx="8" cy="8.5" r="2.5" fill="none" stroke="#4a4539" stroke-width="1.2"/></svg></div></div>
<div class="abs" style="left:27.0px;top:951.6px;font-size:14.2px;line-height:20px;color:#4a4539">@</div>
<svg class="abs" style="left:47px;top:950px" width="50" height="24" viewBox="1160 950 50 24"><path d="M1170.4 958.2 V964.8 A2.9 2.9 0 0 0 1176.2 964.8 V957.6 A2.1 2.1 0 0 0 1172 957.6 V964.4 A1.1 1.1 0 0 0 1174.3 964.4 V958.6" fill="none" stroke="#4a4539" stroke-width="1.1" transform="rotate(-8 1173 962)"/><rect x="1196.6" y="955.3" width="4.8" height="8.6" rx="2.4" fill="none" stroke="#4a4539" stroke-width="1.1"/><path d="M1194.5 961 V961.6 A4.5 4.5 0 0 0 1203.5 961.6 V961 M1199 966.2 V968.6 M1196.4 968.7 H1201.6" fill="none" stroke="#4a4539" stroke-width="1.1"/></svg>
<div class="tx" style="left:640px;top:952px;font-size:11px;color:#8f8e85;letter-spacing:0.339px;">GPT 4o</div>
<div class="abs" style="left:681px;top:956px"><svg width="12" height="12" viewBox="0 0 12 12" style=""><path d="M3 4.5 L6 7.5 L9 4.5" fill="none" stroke="#8f8e85" stroke-width="1"/></svg></div>
<div class="abs" style="left:703px;top:954px"><svg width="16" height="16" viewBox="0 0 16 16" style=""><path d="M2 2.5 L14 8 L2 13.5 L2 9 L8 8 L2 7 Z" fill="none" stroke="#b3ad9c" stroke-width="1"/></svg></div>
<div class="abs" style="left:723px;top:957px"><svg width="10" height="10" viewBox="0 0 10 10" style=""><path d="M2.5 3.5 L5 6 L7.5 3.5" fill="none" stroke="#b3ad9c" stroke-width="1"/></svg></div>
<div style="position:absolute;top:954.2px;line-height:34px;color:rgba(255,255,255,.88);white-space:nowrap;text-shadow:1px 1px 0 #34342f,1.3px 1.3px 1px #45453f;font-weight:300;left:453.5px;font-size:24.5px;top:956.8px">掘金技术社区</div>
<div style="position:absolute;top:954.2px;line-height:34px;color:rgba(255,255,255,.88);white-space:nowrap;text-shadow:1px 1px 0 #34342f,1.3px 1.3px 1px #45453f;font-weight:300;left:609.5999999999999px;font-size:24px;top:954.6px;font-family:'Noto Sans CJK SC','Liberation Sans',sans-serif">@</div>
<div style="position:absolute;top:954.2px;line-height:34px;color:rgba(255,255,255,.88);white-space:nowrap;text-shadow:1px 1px 0 #34342f,1.3px 1.3px 1px #45453f;font-weight:300;left:641px;font-size:24.5px;font-family:'Noto Sans CJK SC','Liberation Sans',sans-serif;letter-spacing:.95px">meetqy</div>
</div>
<div id="st">
<svg class="abs" style="left:0;top:0" width="8" height="21" viewBox="0 0 8 21"><circle cx="0.6" cy="8.3" r="2.1" fill="none" stroke="#5e625c" stroke-width="1.1"/><path d="M1.6 10.2 L-1 13.5" stroke="#5e625c" stroke-width="1.1"/></svg>
<div class="i" style="left:9.2px;letter-spacing:0.778px;">v1*</div>
<svg class="abs" style="left:0;top:0" width="120" height="21" viewBox="0 994 120 21"><path d="M36.9 1003.3 A5.3 5.3 0 0 1 46.6 1002.4 M47.1 1006.7 A5.3 5.3 0 0 1 37.4 1007.6" fill="none" stroke="#5e625c" stroke-width="1.15"/><path d="M48.9 1003.6 L45.2 1004.4 L47.6 1000.9 Z M35.1 1006.4 L38.8 1005.6 L36.4 1009.1 Z" fill="#5e625c"/><path d="M69.6 997.6 V1011.3" stroke="#5e625c" stroke-width="1.15"/><circle cx="66.3" cy="1001" r="1.55" fill="none" stroke="#5e625c" stroke-width="1"/><circle cx="66.3" cy="1008.7" r="1.55" fill="none" stroke="#5e625c" stroke-width="1"/><path d="M66.3 1002.6 V1007.1" stroke="#5e625c" stroke-width="1"/><circle cx="73.3" cy="1004.3" r="1.55" fill="none" stroke="#5e625c" stroke-width="1"/><path d="M73.5 1005.9 C73.5 1008.5 72 1009.6 70.2 1009.8" fill="none" stroke="#5e625c" stroke-width="1"/><path d="M105.4 999.3 C101.5 999.3 98.6 1001.3 96.9 1005.2 L99.6 1007.9 C103.5 1006.2 105.4 1003.2 105.4 999.3 Z" fill="none" stroke="#5e625c" stroke-width="1.05" stroke-linejoin="round"/><path d="M97.4 1004.3 L94.6 1004.6 L96.6 1002.4 L98.6 1002.3 M100.5 1007.4 L100.2 1010.2 L102.4 1008.2 L102.5 1006.2 M95 1010 L97.2 1007.6" fill="none" stroke="#5e625c" stroke-width="1"/><circle cx="102.1" cy="1002.7" r=".9" fill="#5e625c"/></svg>
<div class="i" style="left:110.2px;letter-spacing:0.436px;">iamericfletcher/awesome-r-learning-resources#13 needs reviewers</div>
<div class="abs" style="left:508.0px;top:4.5px"><svg width="14" height="14" viewBox="0 0 16 16" style=""><circle cx="8" cy="8" r="6.3" fill="none" stroke="#5e625c" stroke-width="1.1"/><path d="M5.5 5.5 L10.5 10.5 M10.5 5.5 L5.5 10.5" stroke="#5e625c" stroke-width="1.1"/></svg></div>
<div class="i" style="left:525.1px;">0</div>
<div class="abs" style="left:536.0px;top:4.5px"><svg width="14" height="14" viewBox="0 0 16 16" style=""><path d="M8 2 L14.5 14 H1.5 Z" fill="none" stroke="#5e625c" stroke-width="1.1"/><path d="M8 6.5 V10.5 M8 11.7 V12.8" stroke="#5e625c" stroke-width="1.1"/></svg></div>
<div class="i" style="left:553.7px;">0</div>
<div class="abs" style="left:564.0px;top:4.5px"><svg width="14" height="14" viewBox="0 0 16 16" style=""><circle cx="8" cy="8" r="6.3" fill="none" stroke="#5e625c" stroke-width="1.1"/><path d="M8 7 V11.5 M8 4.5 V5.7" stroke="#5e625c" stroke-width="1.2"/></svg></div>
<div class="i" style="left:582.1px;">7</div>
<div class="abs" style="left:605.0px;top:4.5px"><svg width="14" height="14" viewBox="0 0 16 16" style=""><path d="M8 7 L5 14.5 M8 7 L11 14.5 M6.2 11.5 H9.8" fill="none" stroke="#5e625c" stroke-width="1.1"/><circle cx="8" cy="6" r="1.3" fill="#5e625c"/><path d="M4.8 3 A4.5 4.5 0 0 0 4.8 9 M11.2 3 A4.5 4.5 0 0 1 11.2 9 M2.8 1.5 A7 7 0 0 0 2.8 10.5 M13.2 1.5 A7 7 0 0 1 13.2 10.5" fill="none" stroke="#5e625c" stroke-width="1"/></svg></div>
<div class="i" style="left:622.7px;">0</div>
<div class="i" style="left:646.0px;letter-spacing:0.31px;">Git Graph</div>
<div class="abs" style="left:717.0px;top:4.5px"><svg width="14" height="14" viewBox="0 0 16 16" style=""><path d="M9.5 1.5 L4 8.5 H8 L6.5 14.5 L12 7 H8.5 Z" fill="none" stroke="#5e625c" stroke-width="1" transform="rotate(15 8 8)"/></svg></div>
<div class="abs" style="left:874.25px;top:5.75px"><svg width="11.5" height="11.5" viewBox="0 0 16 16" style=""><circle cx="8" cy="8" r="3" fill="none" stroke="#5e625c" stroke-width="1.2"/><path d="M8 1 V5 M8 11 V15" stroke="#5e625c" stroke-width="1.2"/></svg></div>
<div class="i" style="left:890.2px;letter-spacing:0.254px;">You, 3 weeks ago</div>
<div class="i" style="left:1004.8px;letter-spacing:0.336px;">Ln 18, Col 1</div>
<div class="i" style="left:1089.6px;letter-spacing:0.317px;">Spaces: 2</div>
<div class="i" style="left:1161.9px;letter-spacing:0.527px;">UTF-8</div>
<div class="i" style="left:1214.2px;letter-spacing:-0.702px;">LF</div>
<div class="i" style="left:1242.5px;font-size:11px;letter-spacing:-1px">{ }</div>
<div class="i" style="left:1262.0px;letter-spacing:0.501px;">TypeScript</div>
<div class="abs" style="left:1338.25px;top:5.75px"><svg width="11.5" height="11.5" viewBox="0 0 16 16" style=""><circle cx="8" cy="7" r="1.5" fill="#5e625c"/><path d="M8 8 V15" stroke="#5e625c" stroke-width="1.2"/><path d="M5 10.5 A4.5 4.5 0 1 1 11 10.5 M3.5 12.5 A7 7 0 1 1 12.5 12.5" fill="none" stroke="#5e625c" stroke-width="1"/></svg></div>
<div class="i" style="left:1354.6px;letter-spacing:0.158px;">Go Live</div>
<div class="abs" style="left:1412.5px;top:4.0px"><svg width="15" height="15" viewBox="0 0 16 16" style=""><path d="M3 7 C3 3 6 2.5 8 4 C10 2.5 13 3 13 7 M2 8.5 C2 7.5 3 7 3 7 M14 8.5 C14 7.5 13 7 13 7" fill="none" stroke="#5e625c" stroke-width="1.3"/><rect x="2" y="7.5" width="12" height="6" rx="2.8" fill="none" stroke="#5e625c" stroke-width="1.3"/><path d="M6.3 9.5 v2 M9.7 9.5 v2" stroke="#5e625c" stroke-width="1.3"/><path d="M4 4.5 a2 2 0 0 1 3.5 0 v2 h-3.5z M8.5 4.5 a2 2 0 0 1 3.5 0 v2 h-3.5z" fill="none" stroke="#5e625c" stroke-width="1.1"/></svg></div>
<div class="i" style="left:1442.8px;letter-spacing:0.352px;">Colorize: 136 variables</div>
<div class="abs" style="left:1589.75px;top:5.25px"><svg width="12.5" height="12.5" viewBox="0 0 16 16" style=""><circle cx="8" cy="8" r="6.3" fill="none" stroke="#5e625c" stroke-width="1.1"/><path d="M3.5 12.5 L12.5 3.5" stroke="#5e625c" stroke-width="1.1"/></svg></div>
<div class="i" style="left:1606.0px;letter-spacing:0.355px;">Colorize</div>
<div class="abs" style="left:1669.75px;top:5.25px"><svg width="12.5" height="12.5" viewBox="0 0 16 16" style=""><path d="M1 9 L4 12 L10 4 M7 11 L8 12 L14 4" fill="none" stroke="#8f9a9a" stroke-width="1"/></svg></div>
<div class="i" style="left:1686.1px;letter-spacing:0.503px;">Prettier</div>
<div class="abs" style="left:1745.75px;top:5.25px"><svg width="12.5" height="12.5" viewBox="0 0 16 16" style=""><circle cx="8" cy="8" r="6.3" fill="none" stroke="#5e625c" stroke-width="1.1"/><ellipse cx="8" cy="8" rx="2.8" ry="6.3" fill="none" stroke="#5e625c" stroke-width="1"/><path d="M1.7 8 H14.3 M2.8 4.5 H13.2 M2.8 11.5 H13.2" stroke="#5e625c" stroke-width=".9"/></svg></div>
<div class="i" style="left:1761.2px;letter-spacing:-0.271px;">EN</div>
<div class="abs" style="left:1794.75px;top:5.25px"><svg width="12.5" height="12.5" viewBox="0 0 16 16" style=""><path d="M1 8.5 C3 4.5 6 4 8 4 C10 4 13 4.5 15 8.5" fill="none" stroke="#5e625c" stroke-width="1.1"/><circle cx="8" cy="9" r="2.5" fill="none" stroke="#5e625c" stroke-width="1.1"/></svg></div>
<div class="i" style="left:1811.0px;letter-spacing:-0.771px;">EN</div>
<div class="abs" style="left:1843.0px;top:4.5px"><svg width="14" height="14" viewBox="0 0 16 16" style=""><path d="M4 11 V7 A4 4 0 0 1 12 7 V11 L13.5 12.5 H2.5 Z M6.5 14 A1.5 1.5 0 0 0 9.5 14" fill="none" stroke="#5e625c" stroke-width="1.1"/></svg></div>
</div>
</div>
</body></html>
